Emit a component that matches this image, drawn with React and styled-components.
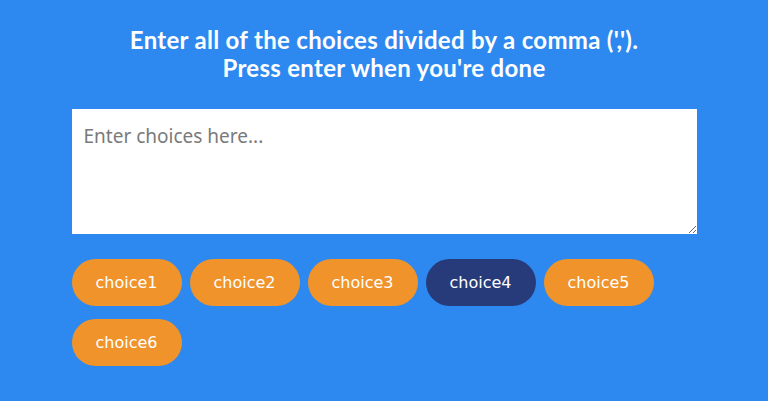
import React from "react";
import styled, { createGlobalStyle } from "styled-components";

const Global = createGlobalStyle`
  html, body { margin: 0; padding: 0; }
  body { background: #2d89ef; font-family: Lato, "Liberation Sans", sans-serif; }
`;

const Page = styled.div`
  width: 625px;
  margin: 0 auto;
  padding-top: 26px;
`;

const Heading = styled.h1`
  margin: 0 0 27px;
  color: #fff;
  font-family: Lato, "Liberation Sans", sans-serif;
  font-weight: 700;
  font-size: 24px;
  line-height: 28px;
  letter-spacing: 0.3px;
  text-align: center;
`;

const Input = styled.textarea`
  display: block;
  box-sizing: border-box;
  width: 625px;
  height: 125px;
  border: none;
  outline: none;
  padding: 14px 12px;
  margin: 0;
  font-family: "Noto Sans", "Liberation Sans", sans-serif;
  font-size: 19px;
  color: #333;
  &::placeholder { color: #7a7a7a; }
`;

const Choices = styled.div`
  display: flex;
  flex-wrap: wrap;
  gap: 13px 8px;
  margin-top: 25px;
`;

const Pill = styled.button`
  box-sizing: border-box;
  width: 110px;
  height: 47px;
  border: none;
  border-radius: 24px;
  background: ${(p) => (p.$active ? "#273b7a" : "#f0932b")};
  color: #fff;
  font-family: "DejaVu Sans", Verdana, sans-serif;
  font-size: 16px;
  padding: 0;
  cursor: pointer;
`;

const choices = ["choice1", "choice2", "choice3", "choice4", "choice5", "choice6"];

export default function App() {
  return (
    <>
      <Global />
      <Page>
        <Heading>
          Enter all of the choices divided by a comma (',').
          <br />
          Press enter when you're done
        </Heading>
        <Input placeholder="Enter choices here..." />
        <Choices>
          {choices.map((c) => (
            <Pill key={c} $active={c === "choice4"}>{c}</Pill>
          ))}
        </Choices>
      </Page>
    </>
  );
}
